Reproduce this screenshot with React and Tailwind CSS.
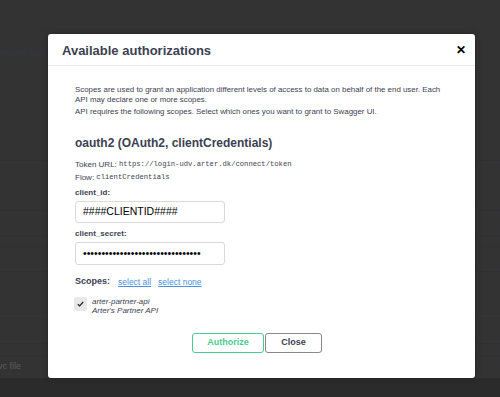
import React from 'react';

function CheckIcon() {
  return (
    <svg width="7" height="6" viewBox="0 0 7 6" fill="none">
      <path d="M0.8 3.2 L2.6 4.9 L6.2 1" stroke="#222" strokeWidth="1.2" />
    </svg>
  );
}

function Field({ children, className = '' }) {
  return (
    <div className={`mt-[3px] flex items-center w-[150px] px-[7px] border border-[#d9d9d9] rounded-[3px] text-black ${className}`}>
      {children}
    </div>
  );
}

export default function App() {
  return (
    <div className="relative w-[500px] h-[397px] overflow-hidden bg-[#333333] font-['Liberation_Sans',Arial,sans-serif]">
      {/* page behind the overlay */}
      <div className="flex flex-col">
        <div className="h-[161px] border-b border-[#2b313b]">
          <div className="mt-[48px] -ml-[1px] text-[8px] leading-[10px] text-[#2f3748]">swagger.json</div>
        </div>
        <div className="h-[46px] border-b border-[#3a2f33]" />
        <div className="h-[4px] border-b border-[#2b313b]" />
        <div className="h-[26px] border-b border-[#2b313b]" />
        <div className="h-[10px] border-b border-[#2d3139]" />
        <div className="h-[25px] border-b border-[#2b313b]" />
        <div className="h-[44px] border-b border-[#35353a]" />
        <div className="h-[28px] border-b border-[#2b313b]" />
        <div className="h-[12px] border-b border-[#2b313b]" />
        <div className="h-[22px] flex items-center">
          <span className="-ml-[2px] text-[9px] text-[#5c5c5c]">vc file</span>
        </div>
        <div className="h-[30px] bg-[#2b2b2b]" />
      </div>

      {/* modal */}
      <div className="absolute left-[48px] top-[34px] w-[427px] h-[344px] bg-white rounded-[3px] shadow-[0_0_6px_rgba(0,0,0,0.3)]">
        <div className="h-[32px] flex items-center justify-between pl-[14px] pr-[9px] border-b border-[#ececec]">
          <h3 className="mt-[2px] text-[13px] font-bold text-[#3b4151]">Available authorizations</h3>
          <button className="mt-[1px] text-[12px] font-bold leading-none text-black">✕</button>
        </div>

        <div className="pl-[27px] pr-[30px] text-[#3b4151]">
          <p className="mt-[19px] text-[7.9px] leading-[10px]">
            Scopes are used to grant an application different levels of access to data on behalf of the end user. Each API may declare one or more scopes.
          </p>
          <p className="mt-[2px] text-[7.9px] leading-[10px]">
            API requires the following scopes. Select which ones you want to grant to Swagger UI.
          </p>

          <h4 className="mt-[19px] text-[12px] leading-[14px] font-bold">oauth2 (OAuth2, clientCredentials)</h4>

          <div className="mt-[8px] flex items-center h-[13px] text-[8px]">
            Token URL:&nbsp;
            <code className="font-['Liberation_Mono',monospace] text-[7.2px] leading-none">https://login-udv.arter.dk/connect/token</code>
          </div>
          <div className="flex items-center h-[13px] text-[8px]">
            Flow:&nbsp;<code className="font-['Liberation_Mono',monospace] text-[7.2px] leading-none">clientCredentials</code>
          </div>

          <div className="mt-[4px] text-[8px] leading-[10px] font-bold">client_id:</div>
          <Field className="h-[22px] text-[10.5px]">####CLIENTID####</Field>

          <div className="mt-[6px] text-[8px] leading-[10px] font-bold">client_secret:</div>
          <Field className="h-[23px] text-[10.5px] leading-none">
            {'•'.repeat(32)}
          </Field>

          <div className="mt-[11px] flex items-center h-[12px]">
            <span className="text-[9px] font-bold mr-[8px]">Scopes:</span>
            <a className="text-[8.5px] text-[#4990e2] underline mr-[7px]">select all</a>
            <a className="text-[8.5px] text-[#4990e2] underline">select none</a>
          </div>

          <div className="mt-[9px] flex items-start">
            <div className="w-[13px] h-[14px] rounded-[2px] bg-[#e8e8e8] flex items-center justify-center -ml-[1px]">
              <CheckIcon />
            </div>
            <div className="ml-[5px] italic text-[8px] leading-[9px] text-[#3b4151]">
              <div>arter-partner-api</div>
              <div>Arter's Partner API</div>
            </div>
          </div>

          <div className="mt-[18px] pr-[6px] flex justify-center gap-[1px]">
            <button className="w-[72px] h-[20px] border-[1.5px] border-[#49cc90] rounded-[3px] text-[9px] font-bold text-[#49cc90]">
              Authorize
            </button>
            <button className="w-[57px] h-[20px] border-[1.5px] border-[#888888] rounded-[3px] text-[9px] font-bold text-[#3b4151]">
              Close
            </button>
          </div>
        </div>
      </div>
    </div>
  );
}
